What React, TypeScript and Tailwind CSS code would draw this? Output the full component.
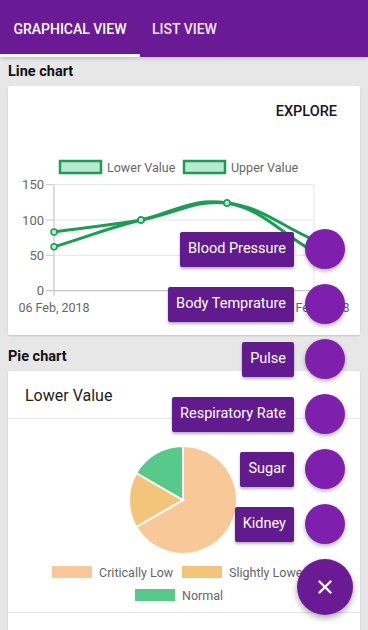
import React from 'react';

type Pt = { x: number; y: number };

const toY = (v: number) => 290.7 - v * 0.707;
const xs = [54, 141, 227, 314];

const upper = [83, 100, 124, 72];
const lower = [62, 100, 124, 55];

// chart.js style spline
const splinePath = (vals: number[], t = 0.4) => {
  const pts: Pt[] = vals.map((v, i) => ({ x: xs[i], y: toY(v) }));
  const cps = pts.map((p, i) => {
    const prev = pts[i - 1] || p;
    const next = pts[i + 1] || p;
    const d01 = Math.hypot(p.x - prev.x, p.y - prev.y);
    const d12 = Math.hypot(next.x - p.x, next.y - p.y);
    const sum = d01 + d12 || 1;
    const fa = (t * d01) / sum;
    const fb = (t * d12) / sum;
    return {
      a: { x: p.x - fa * (next.x - prev.x), y: p.y - fa * (next.y - prev.y) },
      b: { x: p.x + fb * (next.x - prev.x), y: p.y + fb * (next.y - prev.y) },
    };
  });
  let d = `M ${pts[0].x} ${pts[0].y}`;
  for (let i = 1; i < pts.length; i++) {
    const c1 = cps[i - 1].b;
    const c2 = cps[i].a;
    d += ` C ${c1.x} ${c1.y}, ${c2.x} ${c2.y}, ${pts[i].x} ${pts[i].y}`;
  }
  return d;
};

const LineChart = () => (
  <svg width="352" height="201" viewBox="8 134 352 201" className="block">
    {/* legend */}
    <rect x="60" y="161" width="41" height="12" fill="#b9e9cf" stroke="#1a9e55" strokeWidth="2.5" />
    <text x="107" y="172" fontSize="12.5" fill="#666">Lower Value</text>
    <rect x="184" y="161" width="41" height="12" fill="#b9e9cf" stroke="#1a9e55" strokeWidth="2.5" />
    <text x="231" y="172" fontSize="12.5" fill="#666">Upper Value</text>

    {/* grid */}
    {[150, 100, 50].map(v => (
      <line key={v} x1="46" x2="314" y1={toY(v)} y2={toY(v)} stroke="#e6e6e6" strokeWidth="1" />
    ))}
    {[150, 100, 50].map(v => (
      <line key={'t' + v} x1="46" x2="54" y1={toY(v)} y2={toY(v)} stroke="#cfcfcf" strokeWidth="1" />
    ))}
    <line x1="314" x2="314" y1={toY(150)} y2="296" stroke="#e6e6e6" strokeWidth="1" />
    <line x1="46" x2="314" y1={toY(0)} y2={toY(0)} stroke="#c8c8c8" strokeWidth="1.2" />
    <line x1="54" x2="54" y1={toY(150)} y2="296" stroke="#c8c8c8" strokeWidth="1.2" />

    {[150, 100, 50, 0].map(v => (
      <text key={'l' + v} x="44" y={toY(v) + 4.5} fontSize="13" fill="#666" textAnchor="end">
        {v}
      </text>
    ))}
    <text x="54" y="312" fontSize="12.5" fill="#666" textAnchor="middle">06 Feb, 2018</text>
    <text x="314" y="312" fontSize="12.5" fill="#666" textAnchor="middle">10 Feb, 2018</text>

    {/* lines */}
    <path d={splinePath(upper)} fill="none" stroke="#1a9e55" strokeWidth="3" />
    <path d={splinePath(lower)} fill="none" stroke="#1a9e55" strokeWidth="3" />
    {[upper, lower].map((vals, k) =>
      vals.map((v, i) => (
        <circle key={k + '-' + i} cx={xs[i]} cy={toY(v)} r="3" fill="#b9e9cf" stroke="#1a9e55" strokeWidth="1.5" />
      ))
    )}
  </svg>
);

const polar = (cx: number, cy: number, r: number, deg: number) => {
  const a = ((deg - 90) * Math.PI) / 180;
  return { x: cx + r * Math.cos(a), y: cy + r * Math.sin(a) };
};

const slice = (cx: number, cy: number, r: number, from: number, to: number) => {
  const s = polar(cx, cy, r, from);
  const e = polar(cx, cy, r, to);
  const large = to - from > 180 ? 1 : 0;
  return `M ${cx} ${cy} L ${s.x} ${s.y} A ${r} ${r} 0 ${large} 1 ${e.x} ${e.y} Z`;
};

const PieChart = () => (
  <svg width="352" height="193" viewBox="8 419 352 193" className="block">
    <path d={slice(183, 500, 54, 0, 240)} fill="#f8c898" stroke="#fff" strokeWidth="2" />
    <path d={slice(183, 500, 54, 240, 300)} fill="#f4c47a" stroke="#fff" strokeWidth="2" />
    <path d={slice(183, 500, 54, 300, 360)} fill="#57c98b" stroke="#fff" strokeWidth="2" />

    <rect x="52" y="566" width="40" height="12" fill="#f8c898" />
    <text x="99" y="577" fontSize="12.5" fill="#666">Critically Low</text>
    <rect x="182" y="566" width="40" height="12" fill="#f4c47a" />
    <text x="229" y="577" fontSize="12.5" fill="#666">Slightly Lower</text>
    <rect x="135" y="589" width="40" height="12" fill="#57c98b" />
    <text x="182" y="600" fontSize="12.5" fill="#666">Normal</text>
  </svg>
);

const menuItems = ['Blood Pressure', 'Body Temprature', 'Pulse', 'Respiratory Rate', 'Sugar', 'Kidney'];

export default function App() {
  return (
    <div
      className="relative w-[368px] h-[630px] overflow-hidden bg-[#e7e7e7]"
      style={{ fontFamily: 'Roboto, "Noto Sans", sans-serif' }}
    >
      {/* Tabs */}
      <div className="flex h-[57px] bg-[#6a1a94] shadow-[0_2px_3px_rgba(0,0,0,0.15)]">
        <div className="relative flex items-center justify-center w-[140px] pt-[2px] whitespace-nowrap">
          <span className="text-[14px] font-medium text-white">GRAPHICAL VIEW</span>
          <div className="absolute left-0 right-0 bottom-0 h-[3px] bg-white" />
        </div>
        <div className="flex items-center px-3 pt-[2px] whitespace-nowrap">
          <span className="text-[14px] font-medium text-[#f1e6f6]">LIST VIEW</span>
        </div>
      </div>

      <div className="px-2">
        <div className="h-[29px] flex items-center pt-[1px] text-[14.5px] font-bold text-[#111]">Line chart</div>
        <div className="bg-white h-[249px] rounded-[2px] shadow-[0_1px_2px_rgba(0,0,0,0.15)] mb-[7px]">
          <div className="h-[48px] flex items-center justify-end pr-[23px] pt-[3px]">
            <span className="text-[14.5px] font-medium text-[#22102e]">EXPLORE</span>
          </div>
          <LineChart />
        </div>

        <div className="h-[29px] flex items-center pt-[1px] text-[14.5px] font-bold text-[#111]">Pie chart</div>
        <div className="bg-white rounded-[2px] shadow-[0_1px_2px_rgba(0,0,0,0.15)] h-[300px]">
          <div className="h-[48px] flex items-center pl-[17px] pt-[3px] border-b border-[#e6e6e6]">
            <span className="text-[16px] text-[#222]">Lower Value</span>
          </div>
          <PieChart />
          <div className="border-t border-[#e6e6e6]" />
        </div>
      </div>

      {/* FAB speed dial */}
      <div className="absolute right-[15px] bottom-[15px] flex flex-col items-end gap-[15px]">
        {menuItems.map(label => (
          <div key={label} className="flex items-center gap-[11px] pr-2">
            <div className="h-[35px] flex items-center px-2 rounded-[2px] bg-[#621a8f] text-white text-[14.5px] whitespace-nowrap shadow-[0_2px_3px_rgba(0,0,0,0.3)]">
              {label}
            </div>
            <div className="w-10 h-10 rounded-full bg-[#7e1fae] shadow-[0_2px_4px_rgba(0,0,0,0.3)]" />
          </div>
        ))}
        <div className="w-14 h-14 rounded-full bg-[#6a1a94] flex items-center justify-center shadow-[0_3px_6px_rgba(0,0,0,0.35)]">
          <svg width="14" height="14" viewBox="0 0 14 14">
            <path d="M1.5 1.5 L12.5 12.5 M12.5 1.5 L1.5 12.5" stroke="#fff" strokeWidth="2.4" strokeLinecap="round" />
          </svg>
        </div>
      </div>
    </div>
  );
}
